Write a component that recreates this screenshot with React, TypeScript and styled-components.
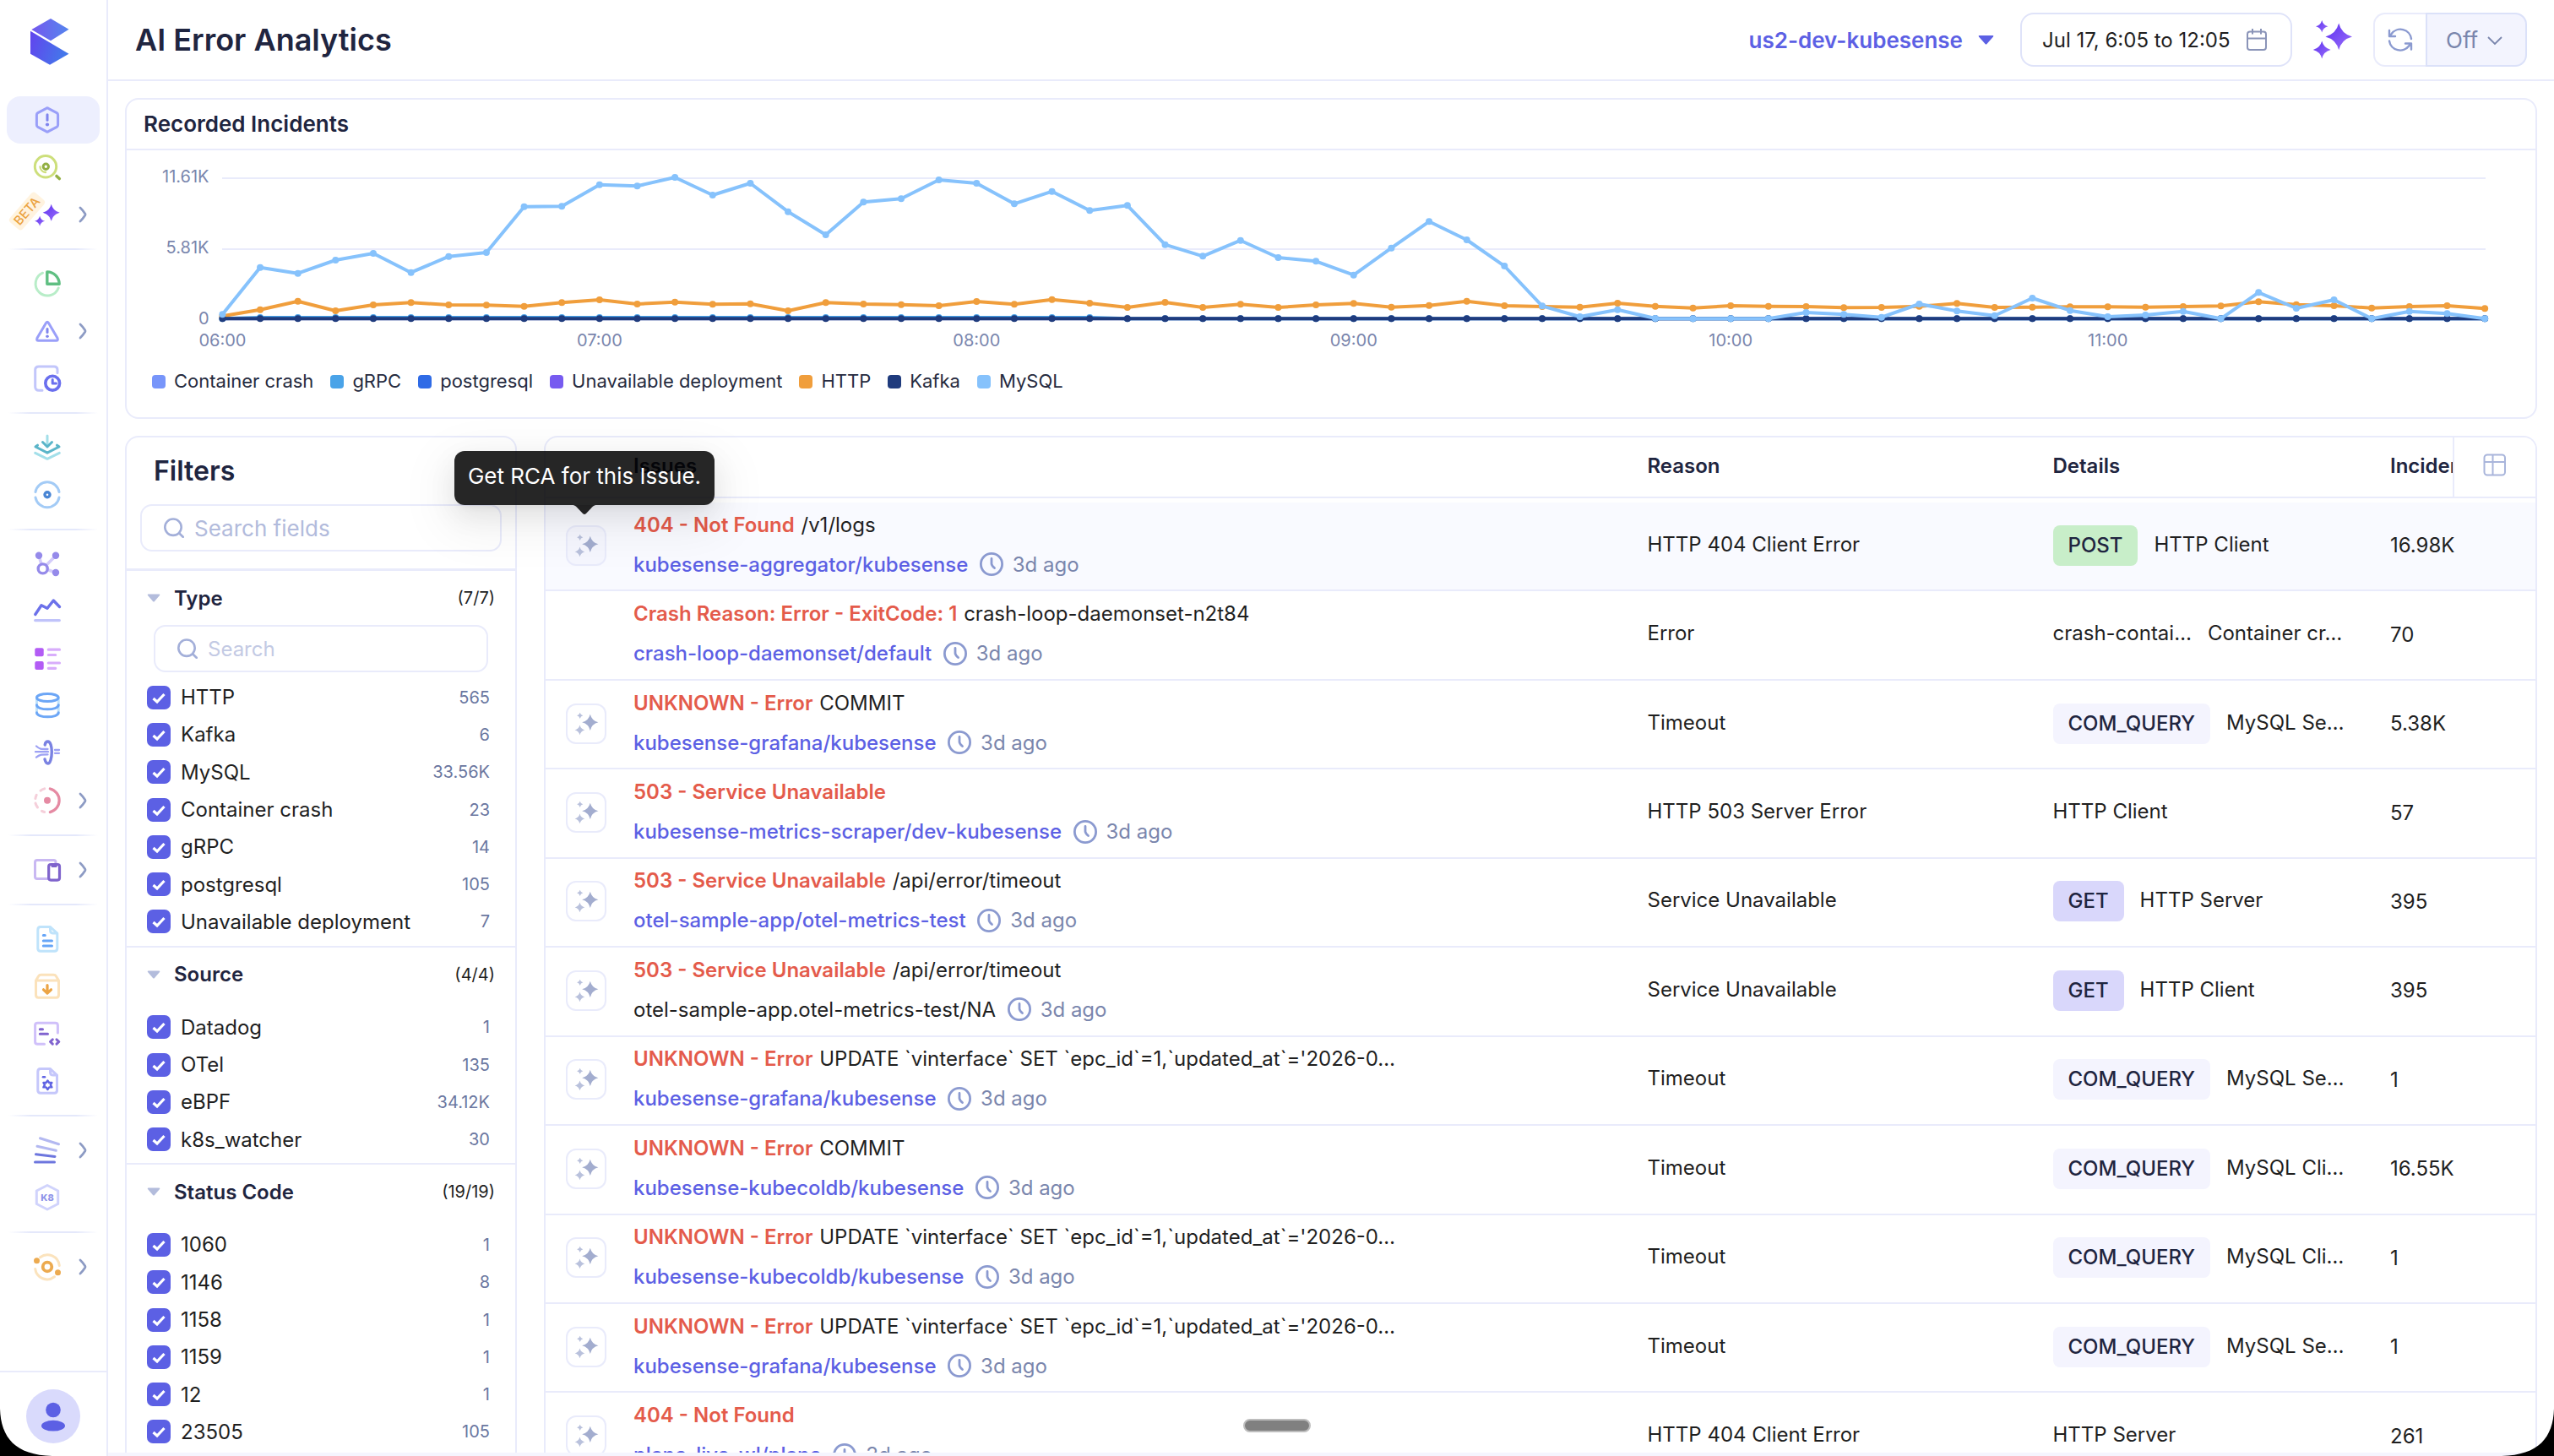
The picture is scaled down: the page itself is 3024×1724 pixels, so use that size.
import React, { ReactNode } from "react";
import styled, { createGlobalStyle, css } from "styled-components";

const c = {
  line: "#e9ebfb",
  ink: "#1f2540",
  text: "#1f1f1f",
  muted: "#7a86ad",
  icon: "#8b9ad0",
  accent: "#5c60e4",
  red: "#e45b4b",
};

const Global = createGlobalStyle`
  *, *::before, *::after { box-sizing: border-box; }
  html, body { margin: 0; padding: 0; background: #fff; }
  body { font-family: Inter, "Liberation Sans", sans-serif; color: ${c.text}; overflow: hidden; }
`;

/* ---------- shell ---------- */

const Root = styled.div`
  position: relative;
  display: flex;
  width: 3024px;
  height: 1724px;
  overflow: hidden;
  background: #fff;
`;

const Sidebar = styled.aside`
  display: flex;
  flex-direction: column;
  flex: none;
  width: 128px;
  border-right: 2px solid ${c.line};
`;

const LogoSlot = styled.div`
  height: 114px;
  padding: 22px 0 0 36px;
`;

const NavGroup = styled.nav`
  display: flex;
  flex-direction: column;
  padding: 0 8px;
`;

const NavItem = styled.a<{ $active?: boolean }>`
  position: relative;
  display: flex;
  align-items: center;
  gap: 20px;
  height: 56px;
  padding-left: 32px;
  border-radius: 16px;
  background: ${(p) => (p.$active ? "#edeffe" : "transparent")};
`;

const NavDivider = styled.div`
  flex: none;
  height: 2px;
  margin: 12px 10px;
  background: linear-gradient(90deg, rgba(225, 229, 250, 0), #e4e8fb 25%, #e4e8fb 75%, rgba(225, 229, 250, 0));
`;

const BetaBadge = styled.span`
  position: absolute;
  left: 1px;
  top: 14px;
  width: 46px;
  height: 20px;
  border-radius: 4px;
  background: #fff3df;
  color: #eba23f;
  font-size: 15px;
  font-weight: 500;
  line-height: 20px;
  text-align: center;
  transform: rotate(-49deg);
`;

const Profile = styled.div`
  margin-top: auto;
  height: 101px;
  padding: 20px 0 0 31px;
  border-top: 2px solid ${c.line};
`;

const Main = styled.main`
  display: flex;
  flex-direction: column;
  flex: 1;
  min-width: 0;
  height: 1724px;
  border-bottom: 4px solid #f5f5fe;
`;

const Header = styled.header`
  display: flex;
  align-items: center;
  flex: none;
  height: 96px;
  padding: 0 32px 0 32px;
  border-bottom: 2px solid ${c.line};
`;

const PageTitle = styled.h1`
  margin: 0 auto 0 0;
  font-size: 36px;
  font-weight: 600;
  color: ${c.ink};
`;

const ClusterSelect = styled.div`
  display: flex;
  align-items: center;
  gap: 18px;
  margin-right: 31px;
  font-size: 26px;
  font-weight: 600;
  color: ${c.accent};
`;

const DateRange = styled.div`
  display: flex;
  align-items: center;
  justify-content: space-between;
  width: 322px;
  height: 64px;
  padding: 0 27px 0 24px;
  border: 2px solid #dfe3f9;
  border-radius: 16px;
  font-size: 24px;
`;

const RefreshGroup = styled.div`
  display: flex;
  height: 64px;
`;

const RefreshButton = styled.div`
  display: flex;
  align-items: center;
  justify-content: center;
  width: 62px;
  border: 2px solid ${c.line};
  border-right: 0;
  border-radius: 14px 0 0 14px;
`;

const IntervalButton = styled.div`
  display: flex;
  align-items: center;
  gap: 11px;
  width: 120px;
  padding-left: 22px;
  border: 2px solid #dbe1f9;
  border-radius: 0 14px 14px 0;
  background: #f3f4fe;
  color: ${c.muted};
  font-size: 26px;
`;

const Content = styled.div`
  display: flex;
  flex-direction: column;
  flex: 1;
  gap: 20px;
  min-height: 0;
  padding: 20px 20px 0 20px;
`;

/* ---------- chart card ---------- */

const ChartCard = styled.section`
  flex: none;
  height: 380px;
  border: 2px solid ${c.line};
  border-radius: 16px;
`;

const CardTitle = styled.h2`
  display: flex;
  align-items: center;
  margin: 0;
  height: 60px;
  padding: 0 0 1px 20px;
  border-bottom: 2px solid ${c.line};
  font-size: 26px;
  font-weight: 600;
  color: ${c.ink};
`;

const ChartSvg = styled.svg`
  display: block;
  width: 2852px;
  height: 252px;
`;

const Legend = styled.div`
  display: flex;
  align-items: center;
  gap: 20px;
  height: 42px;
  padding-left: 30px;
`;

const LegendItem = styled.div<{ $color: string }>`
  display: flex;
  align-items: center;
  gap: 10px;
  margin-top: -1px;
  font-size: 22px;
  color: #262b40;
  &::before {
    content: "";
    width: 16px;
    height: 16px;
    margin-top: 2px;
    border-radius: 4px;
    background: ${(p) => p.$color};
  }
`;

/* ---------- filters ---------- */

const Split = styled.div`
  display: flex;
  gap: 32px;
  flex: 1;
  min-height: 0;
`;

const panel = css`
  border: 2px solid ${c.line};
  border-bottom: 0;
  border-radius: 16px 16px 0 0;
  overflow: hidden;
`;

const FilterPanel = styled.section`
  ${panel}
  flex: none;
  width: 464px;
`;

const FilterHead = styled.div`
  height: 158px;
  padding: 21px 16px 0;
  border-bottom: 3px solid ${c.line};
`;

const FilterTitle = styled.h2`
  margin: 0 0 20px 16px;
  font-size: 32px;
  font-weight: 600;
  line-height: 38px;
  color: ${c.ink};
`;

const SearchBox = styled.div<{ $nested?: boolean }>`
  display: flex;
  align-items: center;
  gap: 12px;
  height: 56px;
  margin: ${(p) => (p.$nested ? "0 32px 7.5px" : "0")};
  padding: 0 26px;
  border: 2px solid ${c.line};
  border-radius: 14px;
  font-size: ${(p) => (p.$nested ? 24 : 26)}px;
  color: ${(p) => (p.$nested ? "#c3cae4" : "#b2bbdc")};
`;

const FilterSection = styled.div<{ $searchable?: boolean }>`
  padding-bottom: 6px;
  border-bottom: 2px solid ${c.line};
`;

const SectionHead = styled.div<{ $tight?: boolean }>`
  display: flex;
  align-items: center;
  gap: 16px;
  height: 64px;
  margin-bottom: ${(p) => (p.$tight ? 0 : 8.5)}px;
  padding: 0 24px;
`;

const SectionName = styled.h3`
  margin: 0 auto 0 0;
  font-size: 24px;
  font-weight: 600;
  color: ${c.ink};
`;

const SectionCount = styled.span`
  font-size: 20px;
  color: ${c.text};
`;

const Option = styled.label`
  display: flex;
  align-items: center;
  gap: 12px;
  height: 44.3px;
  padding: 0 30px 0 24px;
  font-size: 24px;
`;

const OptionCount = styled.span`
  margin-left: auto;
  font-size: 20px;
  color: #6b77a0;
`;

/* ---------- table ---------- */

const TablePanel = styled.section`
  ${panel}
  flex: 1;
  min-width: 0;
`;

const columns = css`
  display: grid;
  grid-template-columns: 104px 1200.5px 480px 399.5px 172px;
`;

const TableHead = styled.div`
  ${columns}
  position: relative;
  align-items: center;
  height: 72px;
  margin-bottom: 5px;
  padding-bottom: 3px;
  border-bottom: 2px solid ${c.line};
  font-size: 24px;
  font-weight: 600;
  color: ${c.ink};
`;

const ColumnPicker = styled.div`
  position: absolute;
  right: 0;
  top: 0;
  width: 98px;
  height: 70px;
  padding: 19px 0 0 34px;
  border-left: 2px solid ${c.line};
  background: #fff;
`;

const Row = styled.div<{ $hover?: boolean }>`
  ${columns}
  align-items: center;
  height: 105.45px;
  padding-bottom: 2px;
  border-bottom: 2px solid ${c.line};
  background: ${(p) => (p.$hover ? "#f9faff" : "#fff")};
  font-size: 24px;
  white-space: nowrap;
`;

const RcaButton = styled.div<{ $hover?: boolean }>`
  width: 48px;
  height: 48px;
  margin-left: 24px;
  border: 2px solid ${c.line};
  border-radius: 12px;
  background: ${(p) => (p.$hover ? "#f5f6fe" : "#fff")};
  svg { display: block; margin: -2px; }
`;

const Issue = styled.div`
  display: flex;
  flex-direction: column;
  margin-top: -2px;
`;

const IssueLine = styled.div`
  line-height: 47px;
  height: 47px;
`;

const IssueMeta = styled(IssueLine)`
  display: flex;
  align-items: center;
`;

const ErrorName = styled.span`
  margin-right: 1px;
  font-weight: 600;
  color: ${c.red};
`;

const Workload = styled.span<{ $plain?: boolean }>`
  margin-right: 12.5px;
  font-weight: ${(p) => (p.$plain ? 400 : 500)};
  color: ${(p) => (p.$plain ? c.text : c.accent)};
`;

const Age = styled.span`
  margin-left: 10px;
  color: ${c.muted};
`;

const Plain = styled.div`
  padding-bottom: 3px;
`;

const Details = styled.div`
  display: flex;
  align-items: center;
  gap: 19px;
`;

const Badge = styled.span<{ $bg: string }>`
  height: 48px;
  padding: 0 18px;
  border-radius: 8px;
  background: ${(p) => p.$bg};
  color: ${c.ink};
  font-weight: 500;
  line-height: 48px;
`;

/* ---------- overlays ---------- */

const Tooltip = styled.div`
  position: absolute;
  left: 538px;
  top: 534px;
  width: 308px;
  height: 64px;
  border-radius: 12px;
  background: rgba(0, 0, 0, 0.85);
  box-shadow: 0 12px 32px rgba(0, 0, 0, 0.08), 0 6px 12px -8px rgba(0, 0, 0, 0.12), 0 18px 56px 16px rgba(0, 0, 0, 0.05);
  color: #fff;
  font-size: 26px;
  line-height: 60px;
  text-align: center;
  svg { position: absolute; left: 138px; top: 64px; }
`;

const DragHandle = styled.div`
  position: absolute;
  left: 1472px;
  top: 1680px;
  width: 80px;
  height: 16px;
  border: 2px solid #bdbdbd;
  border-radius: 8px;
  background: #808080;
`;

const Corner = styled.svg<{ $right?: boolean }>`
  position: absolute;
  bottom: 0;
  ${(p) => (p.$right ? "right: 0; transform: scaleX(-1);" : "left: 0;")}
`;

/* ---------- icons ---------- */

const star = (x: number, y: number, r: number, k = 0.2) =>
  `M${x} ${y - r}Q${x + r * k} ${y - r * k} ${x + r} ${y}Q${x + r * k} ${y + r * k} ${x} ${y + r}Q${x - r * k} ${y + r * k} ${x - r} ${y}Q${x - r * k} ${y - r * k} ${x} ${y - r}Z`;

const IconSvg = styled.svg`
  flex: none;
  width: 32px;
  height: 32px;
  overflow: visible;
`;

const Ico = ({ children }: { children: ReactNode }) => (
  <IconSvg viewBox="0 0 32 32" fill="none" strokeWidth="3" strokeLinecap="round" strokeLinejoin="round">
    {children}
  </IconSvg>
);

const NavChevron = () => (
  <svg width="12" height="22" viewBox="0 0 12 22" fill="none" stroke="#8d9bc4" strokeWidth="2.8" strokeLinecap="round" strokeLinejoin="round">
    <path d="M3 3C4.600 4.400 7.500 8.200 8.700 10Q9.300 11 8.700 12C7.500 13.800 4.600 17.600 3 19" />
  </svg>
);

const icons: Record<string, ReactNode> = {
  issues: (
    <Ico>
      <path d="M14.800 2.300Q16 1.500 17.200 2.300L27.200 7.600Q28.600 8.400 28.600 10V22Q28.600 23.600 27.200 24.400L17.200 29.700Q16 30.500 14.800 29.700L4.800 24.400Q3.400 23.600 3.400 22V10Q3.400 8.400 4.800 7.600Z" stroke="#9a9ff9" />
      <path d="M16 9.800V16.200" stroke="#7f84ee" />
      <circle cx="16" cy="21.500" r="2.100" fill="#7f84ee" />
    </Ico>
  ),
  explore: (
    <Ico>
      <circle cx="14" cy="15.300" r="12.700" stroke="#cddf7b" />
      <circle cx="14.300" cy="15.300" r="3.200" stroke="#93b044" />
      <path d="M7.500 15.500A7 7 0 0 0 14 22" stroke="#cddf7b" strokeWidth="2.400" />
      <path d="M27 26.500L30.300 29.500" stroke="#93b044" strokeWidth="3.600" />
    </Ico>
  ),
  ai: (
    <Ico>
      <defs>
        <linearGradient id="aiGrad" x1="0" y1="0" x2="1" y2="1">
          <stop offset="0.200" stopColor="#6a3df2" />
          <stop offset="1" stopColor="#9a70fa" />
        </linearGradient>
      </defs>
      <path d={star(20.7, 13.7, 10)} fill="url(#aiGrad)" />
      <path d={star(7.1, 23.7, 6)} fill="url(#aiGrad)" />
    </Ico>
  ),
  pie: (
    <Ico>
      <path d="M10.500 3.200A14 14 0 1 0 29.200 21" stroke="#b8edc8" />
      <path d="M15.800 1.900V16.300H30.200A14.400 14.400 0 0 0 15.800 1.900Z" stroke="#5fbf82" strokeWidth="3.400" />
    </Ico>
  ),
  alert: (
    <Ico>
      <path d="M14.600 6.300Q16 4.300 17.400 6.300L28 24.300Q29.200 27.200 26.600 27.200H5.400Q2.800 27.200 4 24.300Z" stroke="#9a9ff9" />
      <path d="M16 13.500V17.500" stroke="#7f84ee" />
      <circle cx="16" cy="22.300" r="1.800" fill="#7f84ee" />
    </Ico>
  ),
  report: (
    <Ico>
      <path d="M10 30.300H6Q1.700 30.300 1.700 26V6Q1.700 2 6 2H24Q28 2 28 6V9.500" stroke="#c2c6fb" />
      <circle cx="22.200" cy="21.700" r="8.400" stroke="#6a6fee" strokeWidth="3.600" />
      <path d="M22.200 17.500V21.900H26.500" stroke="#6a6fee" strokeWidth="3" />
    </Ico>
  ),
  ingest: (
    <Ico>
      <path d="M16 2V13" stroke="#a3dfe9" />
      <path d="M1.700 22.300L16 29.300L30.300 22.300" stroke="#a3dfe9" />
      <path d="M10.500 9.500L16 15L21.500 9.500" stroke="#5bb5c9" />
      <path d="M4.500 13.200L2 15L16 22.200L30 15L27.500 13.200" stroke="#5bb5c9" />
    </Ico>
  ),
  target: (
    <Ico>
      <path d="M2 12.500A14.200 14.200 0 0 1 30 12.500M2 19A14.200 14.200 0 0 0 30 19" stroke="#a3cbf6" />
      <circle cx="16" cy="15.800" r="3" stroke="#4a86d4" strokeWidth="3.400" />
    </Ico>
  ),
  graph: (
    <Ico>
      <path d="M6 6L9 16M26 6L15 17M26 26L16 22.500" stroke="#d4ccfa" strokeWidth="3.600" />
      <circle cx="6" cy="5.700" r="4.200" fill="#958aea" />
      <circle cx="26" cy="5.700" r="4.200" fill="#958aea" />
      <circle cx="26" cy="26" r="4.200" fill="#958aea" />
      <circle cx="10.700" cy="21.400" r="5.500" fill="#fff" stroke="#958aea" strokeWidth="3.400" />
    </Ico>
  ),
  trend: (
    <Ico>
      <path d="M1.800 19.500L9 8.700L16 12.300L23.300 3L30.500 10.500" stroke="#6c71ea" strokeWidth="3.400" />
      <path d="M1.700 26.600H30.300" stroke="#c0c3fa" strokeWidth="3.400" />
    </Ico>
  ),
  list: (
    <Ico>
      <rect x="1.300" y="3.300" width="10.400" height="10" rx="2" fill="#b35cf5" />
      <rect x="1.300" y="19" width="10.400" height="10" rx="2" fill="#b35cf5" />
      <path d="M17.300 5.200H30.500M17.300 11.500H25.700M17.300 21H30.500M17.300 27.300H25.700" stroke="#d8adfb" strokeWidth="3.200" />
    </Ico>
  ),
  database: (
    <Ico>
      <path d="M3.500 5.700V25M29.200 5.700V25" stroke="#bfe1fa" />
      <ellipse cx="16.300" cy="6" rx="12.800" ry="4.600" stroke="#6ca6f6" />
      <path d="M3.500 14.800C3.500 21.500 29.200 21.500 29.200 14.800M3.500 23.800C3.500 30.500 29.200 30.500 29.200 23.800" stroke="#6ca6f6" />
    </Ico>
  ),
  pipe: (
    <Ico>
      <path d="M2 14.200H17M3 7.500C7 11 8 11 16.500 11M3 20.700C7 17.400 8 17.400 16.500 17.400M25 12H30M25 15.800H30" stroke="#9da1f4" strokeWidth="2.300" />
      <path d="M13.200 6C13.500 3.500 15 2 16.700 2C19.700 2 21.300 8 21.300 14.300C21.300 21 19.500 28 16.700 28C15 28 13.800 26 13 23" stroke="#7a82e2" strokeWidth="3.400" />
    </Ico>
  ),
  progress: (
    <Ico>
      <path d="M19.300 2A14.200 14.200 0 0 1 19.300 29.600" stroke="#e58aa3" strokeWidth="3.200" />
      <path d="M12.700 1.900A14.200 14.200 0 0 0 8 4.200M3.200 9.300A14.200 14.200 0 0 0 1.900 13.500M2 19A14.200 14.200 0 0 0 4.500 24M9.500 28.300A14.200 14.200 0 0 0 12.700 29.500" stroke="#f5cfda" />
      <circle cx="16" cy="15.700" r="4" fill="#e58aa3" />
    </Ico>
  ),
  devices: (
    <Ico>
      <rect x="1.500" y="4.500" width="24.500" height="22" rx="2.500" stroke="#c9b8f2" />
      <rect x="17.700" y="9.500" width="12.800" height="18.600" rx="2.500" fill="#fff" stroke="#7f63cc" strokeWidth="3.200" />
      <path d="M22 11.500H26.200" stroke="#7f63cc" strokeWidth="3" />
    </Ico>
  ),
  document: (
    <Ico>
      <path d="M19.500 1.600H8Q4.800 1.600 4.800 5V27Q4.800 30.300 8 30.300H24.500Q27.800 30.300 27.800 27V9L19.500 1.600V5.500Q19.500 9 23 9H27.800" stroke="#bfe3fb" />
      <path d="M11.300 11.500H13.300M11.300 18H21.500M11.300 24H21.500" stroke="#66a5f7" />
    </Ico>
  ),
  archive: (
    <Ico>
      <path d="M2.500 9L5.500 4Q6.500 2.300 8.500 2.300H23.500Q25.500 2.300 26.500 4L29.500 9V26Q29.500 29.300 26.500 29.300H5.500Q2.500 29.300 2.500 26ZM3 9H29" stroke="#fbe2bb" />
      <path d="M16 14.500V23M11.500 19.800L16 24L20.500 19.800" stroke="#eca444" strokeWidth="3.200" />
    </Ico>
  ),
  code: (
    <Ico>
      <path d="M12.500 28.300H4.500Q1.600 28.300 1.600 25.500V6Q1.600 3.200 4.500 3.200H25.500Q28.400 3.200 28.400 6V15" stroke="#d0c0fa" />
      <path d="M7.300 10.700H10.500M7.300 16.200H16.500" stroke="#8164cf" />
      <path d="M22.300 22.800L19.500 25.500L22.300 28.200M27 22.800L29.800 25.500L27 28.200" stroke="#8164cf" />
    </Ico>
  ),
  config: (
    <Ico>
      <path d="M19.500 1.600H8Q4.800 1.600 4.800 5V27Q4.800 30.300 8 30.300H24.500Q27.500 30.300 27.500 27V9L19.500 1.600V5.500Q19.500 9 23 9H27.500" stroke="#c5c7fb" />
      <path d="M11 11.300H13" stroke="#6064e3" strokeWidth="2.600" />
      <path d="M16.400 15.400L18.200 18H21.400L19.800 20.700L21.400 23.400H18.200L16.400 26L14.600 23.400H11.400L13 20.700L11.400 18H14.600Z" stroke="#6064e3" strokeWidth="2.400" />
    </Ico>
  ),
  stack: (
    <Ico>
      <path d="M7.500 1.700L29.500 8.700M4 11.300L26.300 16.300" stroke="#b3b8f1" />
      <path d="M2.500 20.800L25 23.400M1.500 30H24.500" stroke="#6d76de" />
    </Ico>
  ),
  k8: (
    <Ico>
      <path d="M16 1.500L28.700 8V23.500L16 30L3.300 23.500V8Z" stroke="#d0d3fc" />
      <text x="16" y="20" textAnchor="middle" fontSize="11" fontWeight="800" fill="#8e93e9">K8</text>
    </Ico>
  ),
  orbit: (
    <Ico>
      <path d="M7.500 4.800A14.200 14.200 0 0 1 30.300 14.500M1.700 18.500A14.200 14.200 0 0 0 24.500 27.800" stroke="#fbe3bd" />
      <circle cx="16" cy="16" r="5.300" stroke="#ecaa4f" strokeWidth="3.800" />
      <circle cx="3.500" cy="8.700" r="3.500" fill="#ecaa4f" />
      <circle cx="28.500" cy="22.700" r="3.500" fill="#ecaa4f" />
    </Ico>
  ),
};

const SearchIcon = () => (
  <svg width="24" height="24" viewBox="0 0 24 24" fill="none" stroke="#a3afd9" strokeWidth="2.600" strokeLinecap="round">
    <circle cx="11" cy="11.200" r="9.700" />
    <path d="M18.300 18.500L22.700 22.800" />
  </svg>
);

const ClockIcon = () => (
  <svg width="30" height="30" viewBox="0 0 30 30" fill="none" stroke={c.icon} strokeWidth="2.800" strokeLinecap="round">
    <circle cx="15" cy="15" r="12.600" />
    <path d="M15 8.500V14.500Q15 16.500 18.500 19.500" />
  </svg>
);

const CheckIcon = () => (
  <svg width="28" height="28" viewBox="0 0 28 28" fill="none">
    <rect width="28" height="28" rx="7" fill={c.accent} />
    <path d="M7.500 15L12 19L20.500 10" stroke="#fff" strokeWidth="3.200" />
  </svg>
);

const CaretIcon = () => (
  <svg width="16" height="10" viewBox="0 0 16 10">
    <path d="M1.500 0.500H14.500Q16 0.500 15 2L9 9Q8 10 7 9L1 2Q0 0.500 1.500 0.500Z" fill="#b3bcdc" />
  </svg>
);

const RowSparkle = () => (
  <svg width="48" height="48" viewBox="0 0 48 48">
    <path d={star(28.8, 22.3, 9.6)} fill="#a3adcf" />
    <path d={`${star(16.5, 31.4, 5.8)}${star(16.7, 14.3, 3.6)}`} fill="#b9c1dc" />
  </svg>
);

/* ---------- data ---------- */

const navGroups: { icon: string; more?: boolean; active?: boolean; beta?: boolean }[][] = [
  [{ icon: "issues", active: true }, { icon: "explore" }, { icon: "ai", more: true, beta: true }],
  [{ icon: "pie" }, { icon: "alert", more: true }, { icon: "report" }],
  [{ icon: "ingest" }, { icon: "target" }],
  [{ icon: "graph" }, { icon: "trend" }, { icon: "list" }, { icon: "database" }, { icon: "pipe" }, { icon: "progress", more: true }],
  [{ icon: "devices", more: true }],
  [{ icon: "document" }, { icon: "archive" }, { icon: "code" }, { icon: "config" }],
  [{ icon: "stack", more: true }, { icon: "k8" }],
  [{ icon: "orbit", more: true }],
];

const legend: [string, string][] = [
  ["Container crash", "#7795fa"],
  ["gRPC", "#4aa3e8"],
  ["postgresql", "#2f6be6"],
  ["Unavailable deployment", "#775bf0"],
  ["HTTP", "#f09e3c"],
  ["Kafka", "#1f3b7d"],
  ["MySQL", "#86c2fc"],
];

// Heights in thirds of a pixel below the top of the plot area.
const mysql = [577, 410, 431, 384, 360, 428, 371, 357, 194, 193, 116, 121, 90, 153, 111, 212, 294, 178, 166, 99, 111, 184, 140, 208, 190, 329, 370, 314, 375, 388, 437, 341, 247, 312, 405, 547, 585, 560, 591, 592, 592, 592, 570, 577, 587, 540, 565, 581, 519, 563, 585, 579, 566, 592, 499, 555, 525, 592, 566, 574, 592];
const http = [583, 560, 530, 564, 543, 535, 543, 544, 548, 535, 525, 540, 533, 541, 539, 564, 535, 540, 542, 546, 531, 541, 524, 537, 552, 534, 552, 541, 552, 543, 538, 551, 545, 530, 546, 549, 551, 537, 548, 554, 546, 548, 549, 553, 552, 548, 538, 552, 551, 550, 550, 551, 549, 547, 532, 542, 546, 554, 549, 546, 556];
const kafka = mysql.map(() => 592);
const grpc = mysql.map((_, i) => (i > 0 && i < 24 ? 588 : 592));

const px = (i: number) => 263.4 + i * 44.645;
const py = (v: number) => 180 + v / 3;

const Series = ({ values, color }: { values: number[]; color: string }) => (
  <g>
    <polyline points={values.map((v, i) => `${px(i).toFixed(1)},${py(v).toFixed(1)}`).join(" ")} fill="none" stroke={color} strokeWidth="4" strokeLinejoin="round" />
    {values.map((v, i) => (
      <circle key={i} cx={px(i)} cy={py(v)} r="4" fill={color} />
    ))}
  </g>
);

const Chart = () => (
  <ChartSvg viewBox="150 178 2852 252">
    {[211, 295, 379].map((y) => (
      <line key={y} x1="263" x2="2943" y1={y} y2={y} stroke={c.line} strokeWidth="2" />
    ))}
    <g fill={c.muted} fontSize="20">
      <text x="247.500" y="216" textAnchor="end">11.61K</text>
      <text x="247.500" y="300" textAnchor="end">5.81K</text>
      <text x="247.500" y="384" textAnchor="end">0</text>
      {["06:00", "07:00", "08:00", "09:00", "10:00", "11:00"].map((t, i) => (
        <text key={t} x={px(i * 10)} y="410" textAnchor="middle">{t}</text>
      ))}
    </g>
    <Series values={grpc} color="#4aa3e8" />
    <Series values={http} color="#f09e3c" />
    <Series values={kafka} color="#1f3b7d" />
    <Series values={mysql} color="#86c2fc" />
  </ChartSvg>
);

const filters: { name: string; total: string; search?: boolean; options: [string, string][] }[] = [
  {
    name: "Type",
    total: "(7/7)",
    search: true,
    options: [["HTTP", "565"], ["Kafka", "6"], ["MySQL", "33.56K"], ["Container crash", "23"], ["gRPC", "14"], ["postgresql", "105"], ["Unavailable deployment", "7"]],
  },
  { name: "Source", total: "(4/4)", options: [["Datadog", "1"], ["OTel", "135"], ["eBPF", "34.12K"], ["k8s_watcher", "30"]] },
  { name: "Status Code", total: "(19/19)", options: [["1060", "1"], ["1146", "8"], ["1158", "1"], ["1159", "1"], ["12", "1"], ["23505", "105"]] },
];

type IssueRow = {
  error: string;
  subject?: string;
  workload: string;
  plain?: boolean;
  noRca?: boolean;
  reason: string;
  badge?: string;
  details: string[];
  count: string;
};

const update = "UPDATE `vinterface` SET `epc_id`=1,`updated_at`='2026-0…";

const rows: IssueRow[] = [
  { error: "404 - Not Found", subject: "/v1/logs", workload: "kubesense-aggregator/kubesense", reason: "HTTP 404 Client Error", badge: "POST", details: ["HTTP Client"], count: "16.98K" },
  { error: "Crash Reason: Error - ExitCode: 1", subject: "crash-loop-daemonset-n2t84", workload: "crash-loop-daemonset/default", noRca: true, reason: "Error", details: ["crash-contai…", "Container cr…"], count: "70" },
  { error: "UNKNOWN - Error", subject: "COMMIT", workload: "kubesense-grafana/kubesense", reason: "Timeout", badge: "COM_QUERY", details: ["MySQL Se…"], count: "5.38K" },
  { error: "503 - Service Unavailable", workload: "kubesense-metrics-scraper/dev-kubesense", reason: "HTTP 503 Server Error", details: ["HTTP Client"], count: "57" },
  { error: "503 - Service Unavailable", subject: "/api/error/timeout", workload: "otel-sample-app/otel-metrics-test", reason: "Service Unavailable", badge: "GET", details: ["HTTP Server"], count: "395" },
  { error: "503 - Service Unavailable", subject: "/api/error/timeout", workload: "otel-sample-app.otel-metrics-test/NA", plain: true, reason: "Service Unavailable", badge: "GET", details: ["HTTP Client"], count: "395" },
  { error: "UNKNOWN - Error", subject: update, workload: "kubesense-grafana/kubesense", reason: "Timeout", badge: "COM_QUERY", details: ["MySQL Se…"], count: "1" },
  { error: "UNKNOWN - Error", subject: "COMMIT", workload: "kubesense-kubecoldb/kubesense", reason: "Timeout", badge: "COM_QUERY", details: ["MySQL Cli…"], count: "16.55K" },
  { error: "UNKNOWN - Error", subject: update, workload: "kubesense-kubecoldb/kubesense", reason: "Timeout", badge: "COM_QUERY", details: ["MySQL Cli…"], count: "1" },
  { error: "UNKNOWN - Error", subject: update, workload: "kubesense-grafana/kubesense", reason: "Timeout", badge: "COM_QUERY", details: ["MySQL Se…"], count: "1" },
  { error: "404 - Not Found", workload: "plane-live-wl/plane", reason: "HTTP 404 Client Error", details: ["HTTP Server"], count: "261" },
];

const badgeColors: Record<string, string> = { POST: "#c8eec9", GET: "#d9d7fb", COM_QUERY: "#f4f4fe" };

/* ---------- page ---------- */

const Nav = () => (
  <Sidebar>
    <LogoSlot>
      <svg width="46" height="55" viewBox="0 0 46 55">
        <defs>
          <linearGradient id="logoTop" x1="0" y1="0" x2="1" y2="0">
            <stop offset="0" stopColor="#7458ee" />
            <stop offset="1" stopColor="#5585ee" />
          </linearGradient>
          <linearGradient id="logoBase" x1="0" y1="0" x2="1" y2="0.300">
            <stop offset="0" stopColor="#6243ee" />
            <stop offset="1" stopColor="#4477ea" />
          </linearGradient>
        </defs>
        <path d="M24 0L45.500 12.700L24 26.300L1.300 13Z" fill="url(#logoTop)" />
        <path d="M0 14.700L45.500 41.700L23 54.700L0 41.700Z" fill="url(#logoBase)" />
      </svg>
    </LogoSlot>
    {navGroups.map((group, g) => (
      <React.Fragment key={g}>
        {g > 0 && <NavDivider />}
        <NavGroup>
          {group.map((item) => (
            <NavItem key={item.icon} $active={item.active}>
              {icons[item.icon]}
              {item.more && <NavChevron />}
              {item.beta && <BetaBadge>BETA</BetaBadge>}
            </NavItem>
          ))}
        </NavGroup>
      </React.Fragment>
    ))}
    <Profile>
      <svg width="64" height="64" viewBox="0 0 64 64">
        <circle cx="32" cy="32" r="32" fill="#d9dafc" />
        <circle cx="32" cy="24.500" r="8.800" fill={c.accent} />
        <ellipse cx="32" cy="43.200" rx="14" ry="6.400" fill={c.accent} />
      </svg>
    </Profile>
  </Sidebar>
);

const TopBar = () => (
  <Header>
    <PageTitle>AI Error Analytics</PageTitle>
    <ClusterSelect>
      us2-dev-kubesense
      <svg width="19" height="11" viewBox="0 0 19 11">
        <path d="M1.500 0H17.500Q19 0 18 1.500L10.500 10Q9.500 11 8.500 10L1 1.500Q0 0 1.500 0Z" fill={c.accent} />
      </svg>
    </ClusterSelect>
    <DateRange>
      Jul 17, 6:05 to 12:05
      <svg width="26" height="28" viewBox="0 0 26 28" fill="none" stroke="#8a94b8" strokeWidth="2">
        <rect x="2" y="4.500" width="22" height="21.500" rx="3" />
        <path d="M2 12.500H24M8 1V7.500M18 1V7.500" />
      </svg>
    </DateRange>
    <svg width="96" height="64" viewBox="2714 15 96 64">
      <defs>
        <linearGradient id="headGrad" x1="0" y1="0" x2="1" y2="1">
          <stop offset="0.200" stopColor="#6a3df2" />
          <stop offset="1" stopColor="#9a70fa" />
        </linearGradient>
      </defs>
      <path d={star(2769.2, 43.4, 15.8)} fill="url(#headGrad)" />
      <path d={star(2749.2, 59, 10.4)} fill="url(#headGrad)" />
      <path d={star(2749.2, 31.3, 7.2)} fill="url(#headGrad)" />
    </svg>
    <RefreshGroup>
      <RefreshButton>
        <svg width="30" height="30" viewBox="0 0 30 30" fill="none" stroke={c.icon} strokeWidth="2.400" strokeLinecap="round" strokeLinejoin="round">
          <path d="M28 14A13 13 0 0 0 4.500 8.200L2 11M2 4V11H9" />
          <path d="M2 16.500A13 13 0 0 0 25.500 22L28 19.500M28 26.500V19.500H21" />
        </svg>
      </RefreshButton>
      <IntervalButton>
        Off
        <svg width="18" height="18" viewBox="0 0 18 18" fill="none" stroke={c.muted} strokeWidth="1.800">
          <path d="M1 6L9 14L17 6" />
        </svg>
      </IntervalButton>
    </RefreshGroup>
  </Header>
);

const Filters = () => (
  <FilterPanel>
    <FilterHead>
      <FilterTitle>Filters</FilterTitle>
      <SearchBox>
        <SearchIcon />
        Search fields
      </SearchBox>
    </FilterHead>
    {filters.map((f) => (
      <FilterSection key={f.name}>
        <SectionHead $tight={f.search}>
          <CaretIcon />
          <SectionName>{f.name}</SectionName>
          <SectionCount>{f.total}</SectionCount>
        </SectionHead>
        {f.search && (
          <SearchBox $nested>
            <SearchIcon />
            Search
          </SearchBox>
        )}
        {f.options.map(([label, count]) => (
          <Option key={label}>
            <CheckIcon />
            {label}
            <OptionCount>{count}</OptionCount>
          </Option>
        ))}
      </FilterSection>
    ))}
  </FilterPanel>
);

const Table = () => (
  <TablePanel>
    <TableHead>
      <span />
      <span>Issues</span>
      <span>Reason</span>
      <span>Details</span>
      <span>Incidents</span>
      <ColumnPicker>
        <svg width="28" height="28" viewBox="0 0 28 28" fill="none" stroke="#a9b5db" strokeWidth="2">
          <rect x="1.500" y="1.500" width="24.500" height="24" rx="3.500" />
          <path d="M1.500 10H26M11.500 1.500V25.500" />
        </svg>
      </ColumnPicker>
    </TableHead>
    {rows.map((r, i) => (
      <Row key={i} $hover={i === 0}>
        {r.noRca ? (
          <span />
        ) : (
          <RcaButton $hover={i === 0}>
            <RowSparkle />
          </RcaButton>
        )}
        <Issue>
          <IssueLine>
            <ErrorName>{r.error}</ErrorName> {r.subject}
          </IssueLine>
          <IssueMeta>
            <Workload $plain={r.plain}>{r.workload}</Workload>
            <ClockIcon />
            <Age>3d ago</Age>
          </IssueMeta>
        </Issue>
        <Plain>{r.reason}</Plain>
        <Details>
          {r.badge && <Badge $bg={badgeColors[r.badge]}>{r.badge}</Badge>}
          {r.details.map((d) => (
            <Plain key={d}>{d}</Plain>
          ))}
        </Details>
        <div>{r.count}</div>
      </Row>
    ))}
  </TablePanel>
);

export default function App() {
  return (
    <Root>
      <Global />
      <Nav />
      <Main>
        <TopBar />
        <Content>
          <ChartCard>
            <CardTitle>Recorded Incidents</CardTitle>
            <Chart />
            <Legend>
              {legend.map(([name, color]) => (
                <LegendItem key={name} $color={color}>{name}</LegendItem>
              ))}
            </Legend>
          </ChartCard>
          <Split>
            <Filters />
            <Table />
          </Split>
        </Content>
      </Main>
      <Tooltip>
        Get RCA for this Issue.
        <svg width="32" height="12" viewBox="0 0 32 12">
          <path d="M1 0C5 0 6.500 2 8 3.800L14 10Q16 12 18 10L24 3.800C25.500 2 27 0 31 0Z" fill="rgba(0,0,0,0.850)" />
        </svg>
      </Tooltip>
      <DragHandle />
      <Corner width="62" height="58" viewBox="0 0 62 58">
        <path d="M0 2C1 36 18 57 62 58H0Z" fill="#000" />
      </Corner>
      <Corner $right width="62" height="58" viewBox="0 0 62 58">
        <path d="M0 2C1 36 18 57 62 58H0Z" fill="#000" />
      </Corner>
    </Root>
  );
}
